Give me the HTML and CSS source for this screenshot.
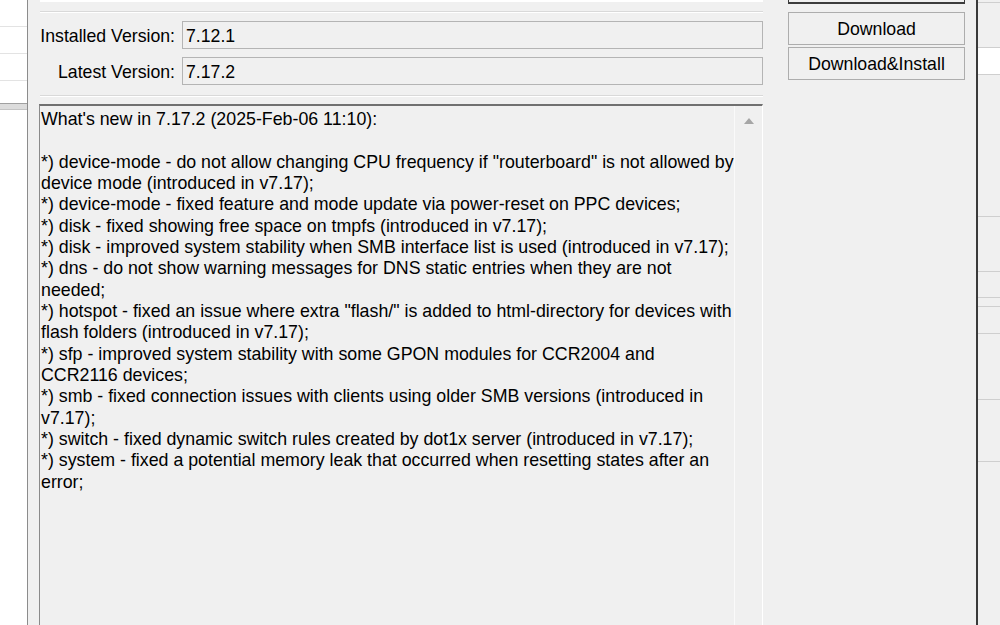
FILE: index.html
```html
<!DOCTYPE html>
<html>
<head>
    <title>Packages - Check For Updates</title>
    <link rel="stylesheet" href="styles.css">
</head>
<body>
    <div class="desk">
        <div class="behind-left">
            <div class="row"></div>
            <div class="row"></div>
            <div class="row"></div>
            <div class="row last"></div>
            <div class="band"></div>
        </div>

        <div class="window">
            <div class="main">
                <div class="top-box"></div>
                <div class="sep"></div>

                <div class="field">
                    <label class="field-label" for="installed">Installed Version:</label>
                    <div class="field-value" id="installed">7.12.1</div>
                </div>
                <div class="field">
                    <label class="field-label" for="latest">Latest Version:</label>
                    <div class="field-value" id="latest">7.17.2</div>
                </div>

                <div class="sep sep-low"></div>

                <div class="notes">
                    <div class="notes-text">What's new in 7.17.2 (2025-Feb-06 11:10):

*) device-mode - do not allow changing CPU frequency if "routerboard" is not allowed by
device mode (introduced in v7.17);
*) device-mode - fixed feature and mode update via power-reset on PPC devices;
*) disk - fixed showing free space on tmpfs (introduced in v7.17);
*) disk - improved system stability when SMB interface list is used (introduced in v7.17);
*) dns - do not show warning messages for DNS static entries when they are not
needed;
*) hotspot - fixed an issue where extra "flash/" is added to html-directory for devices with
flash folders (introduced in v7.17);
*) sfp - improved system stability with some GPON modules for CCR2004 and
CCR2116 devices;
*) smb - fixed connection issues with clients using older SMB versions (introduced in
v7.17);
*) switch - fixed dynamic switch rules created by dot1x server (introduced in v7.17);
*) system - fixed a potential memory leak that occurred when resetting states after an
error;</div>
                    <div class="scrollbar">
                        <svg class="arrow" width="10" height="6" viewBox="0 0 10 6">
                            <polygon points="5,0 10,6 0,6" fill="#a6a6a6"/>
                        </svg>
                    </div>
                </div>
            </div>

            <div class="side">
                <div class="btn btn-focused"></div>
                <button class="btn">Download</button>
                <button class="btn">Download&amp;Install</button>
            </div>
        </div>

        <div class="behind-right">
            <div class="r-row" style="height: 3px"></div>
            <div class="r-row" style="height: 45px"></div>
            <div class="r-row white" style="height: 27px"></div>
            <div class="r-row" style="height: 142px"></div>
            <div class="r-row" style="height: 55px"></div>
            <div class="r-row" style="height: 26px"></div>
            <div class="r-row" style="height: 9px"></div>
            <div class="r-row" style="height: 27px"></div>
            <div class="r-row" style="height: 66px"></div>
            <div class="r-row" style="height: 62px"></div>
            <div class="r-row end"></div>
        </div>
    </div>
</body>
</html>
```

FILE: styles.css
```css
body {
    margin: 0;
    padding: 0;
    background-color: #ffffff;
    font-family: "Liberation Sans", Arial, sans-serif;
    color: #000;
    overflow: hidden;
}

.desk {
    display: flex;
    width: 1000px;
    height: 625px;
    overflow: hidden;
}

/* windows peeking out behind the dialog */
.behind-left {
    width: 27px;
    flex-shrink: 0;
    background-color: #ffffff;
}

.behind-left .row {
    height: 26px;
    border-bottom: 1px solid #e3e3e3;
}

.behind-left .row.last {
    height: 22px;
    border-bottom: 1px solid #a0a0a0;
}

.behind-left .band {
    height: 5px;
    background-color: #dcdcdc;
    border-bottom: 1px solid #c4c4c4;
}

.behind-right {
    flex: 1;
    background-color: #f0f0f0;
    display: flex;
    flex-direction: column;
}

.r-row {
    border-bottom: 1px solid #cfcfcf;
    box-sizing: border-box;
}

.r-row.white {
    background-color: #ffffff;
}

.r-row.end {
    flex: 1;
    border-bottom: none;
}

/* dialog */
.window {
    width: 951px;
    flex-shrink: 0;
    box-sizing: border-box;
    background-color: #f0f0f0;
    border-left: 1px solid #8c8c8c;
    border-right: 2px solid #3a3a3a;
    display: flex;
    padding: 0 11px 0 11px;
    gap: 25px;
}

.main {
    width: 724px;
    flex-shrink: 0;
    display: flex;
    flex-direction: column;
}

.top-box {
    height: 2px;
    margin-left: 1px;
    background-color: #ffffff;
}

.sep {
    margin-top: 9px;
    border-top: 1px solid #d9d9d9;
    border-bottom: 1px solid #ffffff;
    margin-left: 1px;
}

.sep-low {
    margin-top: 10px;
}

.field {
    display: flex;
    align-items: center;
    margin-top: 8px;
}

.field-label {
    width: 137px;
    text-align: right;
    font-size: 17.7px;
    padding: 2px 1px 0 0;
    box-sizing: border-box;
    white-space: nowrap;
}

.field-value {
    flex: 1;
    height: 28px;
    box-sizing: border-box;
    border: 1px solid #b4b4b4;
    background-color: #f0f0f0;
    font-size: 17.7px;
    line-height: 27px;
    padding: 1px 0 0 3px;
    margin-left: 6px;
}

.notes {
    margin-top: 7px;
    flex: 1;
    display: flex;
    border-top: 2px solid #707070;
    border-left: 1px solid #8a8a8a;
    border-right: 1px solid #ffffff;
    margin-bottom: -20px;
}

.notes-text {
    flex: 1;
    white-space: pre;
    font-size: 17.8px;
    line-height: 21.33px;
    padding: 3px 0 0 1px;
}

.scrollbar {
    width: 28px;
    border-left: 1px solid #fafafa;
    display: flex;
    justify-content: center;
    padding-top: 12px;
    box-sizing: border-box;
}

.arrow {
    display: block;
}

.side {
    width: 177px;
    flex-shrink: 0;
    display: flex;
    flex-direction: column;
}

.btn {
    display: block;
    width: 177px;
    height: 33px;
    box-sizing: border-box;
    border: 1px solid #adadad;
    background-color: #f0f0f0;
    font-family: "Liberation Sans", Arial, sans-serif;
    font-size: 17.7px;
    color: #000;
    padding: 1px 0 0 0;
    margin-top: 2px;
    text-align: center;
}

.btn-focused {
    height: 4px;
    margin-top: 0;
    margin-bottom: 6px;
    border: 1px solid #3c3c3c;
    border-width: 0 1px 2px 1px;
}
```
